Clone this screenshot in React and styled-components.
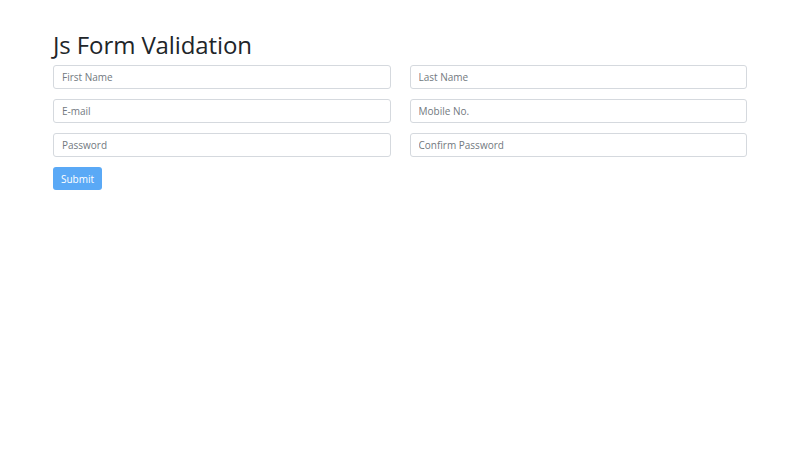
import React from 'react'
import styled, { createGlobalStyle } from 'styled-components'

const GlobalStyle = createGlobalStyle`
  html, body {
    margin: 0;
    padding: 0;
    background: #fff;
    font-family: "Open Sans", "Noto Sans", sans-serif;
    color: #212529;
  }
  * { box-sizing: border-box; }
`

const Container = styled.div`
  width: 694px;
  margin-left: 53px;
  padding-top: 30px;
`

const Title = styled.h1`
  margin: 0 0 5px 0;
  font-size: 24px;
  font-weight: 400;
  line-height: 30px;
  letter-spacing: -0.1px;
  color: #212529;
`

const Grid = styled.form`
  display: grid;
  grid-template-columns: 1fr 1fr;
  column-gap: 19px;
  row-gap: 10px;
`

const Input = styled.input`
  height: 24px;
  width: 100%;
  padding: 0 8px;
  border: 1px solid #d5d9de;
  border-radius: 3px;
  font-family: inherit;
  font-size: 10px;
  color: #495057;
  outline: none;
  &::placeholder {
    color: #727980;
  }
`

const Submit = styled.button`
  margin-top: 10px;
  height: 23px;
  padding: 0 8px;
  border: none;
  border-radius: 3px;
  background: #5aa9f6;
  color: #fff;
  font-family: inherit;
  font-size: 10px;
  cursor: pointer;
`

export default function App() {
  return (
    <>
      <GlobalStyle />
      <Container>
        <Title>Js Form Validation</Title>
        <Grid onSubmit={e => e.preventDefault()}>
          <Input placeholder="First Name" />
          <Input placeholder="Last Name" />
          <Input placeholder="E-mail" />
          <Input placeholder="Mobile No." />
          <Input type="password" placeholder="Password" />
          <Input type="password" placeholder="Confirm Password" />
        </Grid>
        <Submit type="submit">Submit</Submit>
      </Container>
    </>
  )
}
